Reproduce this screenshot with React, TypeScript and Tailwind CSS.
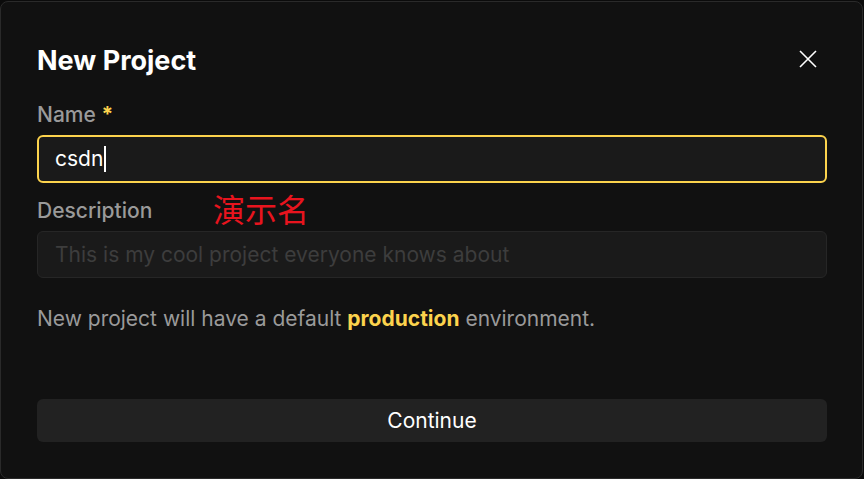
import React from "react";

export default function App() {
  return (
    <div className="w-[864px] h-[479px] bg-[#0b0b0b] overflow-hidden" style={{ fontFamily: "Inter, 'Noto Sans CJK SC', sans-serif" }}>
      <div className="relative w-[863px] h-[478px] mt-[1px] rounded-[8px] border border-[#2a2a2a] bg-[#111111] px-[36px] pt-[41px]">
        <div className="flex items-start justify-between">
          <h1 className="text-[27px] leading-[36px] font-bold text-white">New Project</h1>
          <button className="mr-[8px] mt-[6px] text-white">
            <svg width="20" height="20" viewBox="0 0 20 20" fill="none" stroke="currentColor" strokeWidth="1.6">
              <path d="M2 2 L18 18 M18 2 L2 18" />
            </svg>
          </button>
        </div>
        <div className="mt-[22px] text-[21px] leading-[28px] text-[#9a9a9a] font-medium">
          Name <span className="text-[#fcd34d] font-bold">*</span>
        </div>
        <div className="mt-[6px] h-[48px] w-[790px] rounded-[6px] border-2 border-[#fcd34d] bg-[#1a1a1a] px-[16px] flex items-center">
          <span className="text-[21px] text-white">csdn</span>
          <span className="ml-[1px] w-[2px] h-[26px] bg-white" />
        </div>
        <div className="mt-[14px] text-[21px] leading-[28px] text-[#9a9a9a] font-medium">Description</div>
        <div className="mt-[6px] h-[47px] w-[790px] rounded-[6px] border border-[#262626] bg-[#1a1a1a] px-[17px] flex items-center">
          <span className="text-[21px] text-[#3d3d3d]">This is my cool project everyone knows about</span>
        </div>
        <p className="mt-[27px] text-[21px] leading-[28px] text-[#9a9a9a]">
          New project will have a default <span className="font-bold text-[#fcd34d]">production</span> environment.
        </p>
        <button className="mt-[66px] h-[43px] w-[790px] rounded-[6px] bg-[#222222] text-[21px] text-white">Continue</button>
        <div className="absolute left-[212px] top-[185px] text-[32px] leading-[42px] text-[#e8141e]" style={{ fontFamily: "'Noto Sans CJK SC', sans-serif" }}>演示名</div>
      </div>
    </div>
  );
}
